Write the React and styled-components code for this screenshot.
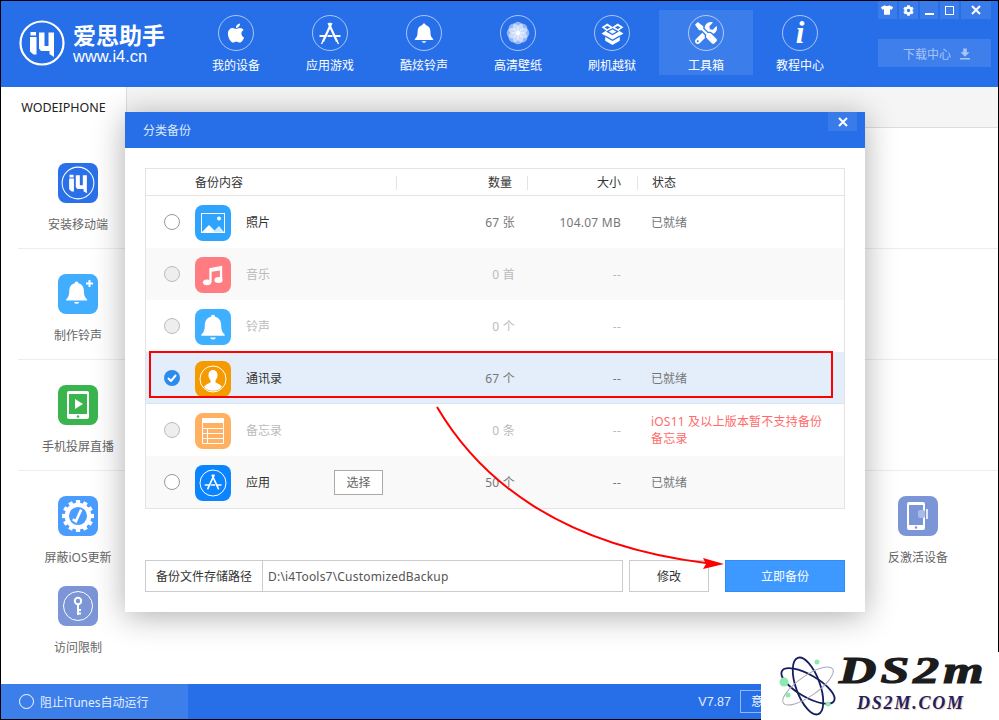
import React from 'react';
import styled, { createGlobalStyle } from 'styled-components';
import { FaApple, FaTshirt, FaCog, FaTools } from 'react-icons/fa';

const FONT = '"Noto Sans", "Noto Sans CJK SC", sans-serif';
const BLUE = '#276fe8';

const Global = createGlobalStyle`
  html, body { margin: 0; padding: 0; background: #000; }
  body { font-family: ${FONT}; font-size: 12px; }
  * { box-sizing: border-box; }
`;

const Win = styled.div`
  position: relative; width: 999px; height: 720px; padding: 1px; background: #000;
  display: flex; flex-direction: column; overflow: hidden;
`;
const Header = styled.header`
  height: 86px; background: ${BLUE}; display: flex; flex: none; padding-left: 18px;
`;
const Brand = styled.div`
  width: 170px; display: flex; align-items: flex-start; padding-top: 19px; gap: 8px; color: #fff;
`;
const BrandText = styled.div`display: flex; flex-direction: column; padding-top: 1px;`;
const BrandName = styled.div`
  font-size: 23px; font-weight: 700; line-height: 26px; height: 26px; width: 94px; white-space: nowrap;
  font-family: "Noto Sans CJK SC", sans-serif;
`;
const BrandUrl = styled.div`
  font-family: "Liberation Sans", sans-serif; font-size: 16.500px; line-height: 16px; margin-top: 1px;
`;
const Nav = styled.nav`display: flex; padding-top: 9px;`;
const NavItem = styled.div`
  width: 94px; height: 65px; display: flex; flex-direction: column; align-items: center; padding-top: 5px;
  background: ${p => (p.$active ? '#3b7dea' : 'transparent')}; color: #fff;
`;
const NavCircle = styled.div`
  width: 36px; height: 36px; border-radius: 50%; border: 1px solid rgba(255,255,255,.6);
  display: flex; align-items: center; justify-content: center; color: #fff; font-size: 20px;
`;
const NavLabel = styled.div`font-size: 12px; line-height: 18px; margin-top: 6px;`;
const InfoI = styled.span`
  font-family: "Liberation Serif", serif; font-style: italic; font-weight: 700; font-size: 31px; line-height: 30px;
`;
const RightCol = styled.div`
  margin-left: auto; margin-right: 7px; width: 113px; display: flex; flex-direction: column;
`;
const Controls = styled.div`display: flex; gap: 2px; height: 18px;`;
const Ctl = styled.div`
  width: ${p => p.$w || 19}px; height: 18px; background: #3a7bea; color: #fff; font-size: 11px;
  display: flex; align-items: center; justify-content: center;
`;
const DownloadBtn = styled.div`
  margin-top: 20px; height: 28px; background: #3f7feb; color: rgba(255,255,255,.55); font-size: 12px;
  display: flex; align-items: center; justify-content: center; gap: 9px; padding: 2px 0 0 4px;
`;
const TabBar = styled.div`
  height: 41px; flex: none; background: #f5f5f5; border-bottom: 1px solid #ddd; display: flex;
`;
const DeviceTab = styled.div`
  width: 126px; background: #fff; border-right: 1px solid #ddd; margin-bottom: -1px; color: #222;
  font-size: 12.500px; display: flex; align-items: center; justify-content: center;
`;
const Content = styled.main`flex: 1; background: #fff; padding-left: 17px; overflow: hidden;`;
const ToolRow = styled.section`
  display: grid; grid-template-columns: repeat(8, 120px);
  padding-top: ${p => p.$pt}px; height: ${p => p.$h}px;
  border-bottom: ${p => (p.$line ? '1px solid #eee' : 'none')};
`;
const Tool = styled.div`
  grid-column: ${p => p.$col || 'auto'};
  display: flex; flex-direction: column; align-items: center;
`;
const ToolIcon = styled.div`
  width: 40px; height: 40px; border-radius: 8px; background: ${p => p.$bg};
  display: flex; align-items: center; justify-content: center;
`;
const ToolLabel = styled.div`margin-top: 13px; font-size: 12px; line-height: 18px; color: #666; white-space: nowrap;`;
const BottomBar = styled.footer`
  height: 35px; flex: none; background: ${BLUE}; display: flex; align-items: center; color: #fff;
`;
const ItunesToggle = styled.div`
  width: 187px; height: 100%; background: #3c7eea; display: flex; align-items: center; padding-left: 18px; gap: 6px;
  color: #e4eeff;
`;
const HollowDot = styled.span`width: 15px; height: 15px; border-radius: 50%; border: 1px solid #fff;`;
const Version = styled.div`margin-left: auto; font-family: "Liberation Sans", sans-serif; font-size: 12.500px; margin-right: 9px; color: #e4eeff;`;
const FeedbackBtn = styled.div`
  width: 90px; height: 23px; margin-right: 168px; border: 1px solid rgba(255,255,255,.5); padding-left: 10px; line-height: 21px;
`;
const Modal = styled.div`
  position: absolute; left: 125px; top: 112px; width: 740px; height: 500px; background: #fff;
  box-shadow: 0 4px 30px rgba(0,0,0,.32); display: flex; flex-direction: column;
`;
const ModalHead = styled.div`
  position: relative; height: 36px; flex: none; background: ${BLUE}; color: #dce8fc; font-size: 12px; line-height: 38px; padding-left: 18px;
`;
const ModalClose = styled.div`
  position: absolute; right: 8px; top: 0; width: 29px; height: 19px; background: #3a7bea;
  display: flex; align-items: center; justify-content: center;
`;
const ModalBody = styled.div`padding: 20px 20px 20px; flex: 1; display: flex; flex-direction: column;`;
const Table = styled.div`height: 341px; border: 1px solid #e4e4e4; display: flex; flex-direction: column;`;
const TableHead = styled.div`
  height: 27px; flex: none; border-bottom: 1px solid #e4e4e4; display: grid; grid-template-columns: 49px 202px 131px 110px 1fr;
  align-items: center; color: #333; line-height: 14px; padding-top: 2px;
`;
const HeadCell = styled.div`
  grid-column: ${p => p.$col || 'auto'};
  text-align: ${p => p.$align || 'left'}; padding: ${p => p.$pad || '0'};
  border-right: ${p => (p.$sep ? '1px solid #e4e4e4' : 'none')};
`;
const Row = styled.div`
  height: 52px; flex: none; display: grid; grid-template-columns: 49px 51px 150px 119px 106px 1fr; align-items: center;
  background: ${p => p.$bg || '#fff'};
  box-shadow: ${p => (p.$sel ? 'inset 0 -1px 0 #d6e3f3' : 'none')};
`;
const RadioCell = styled.div`padding-left: 18px; display: flex;`;
const Radio = styled.span`
  width: 16px; height: 16px; border-radius: 50%;
  border: 1px solid ${p => (p.$off ? '#bbb' : '#999')};
  background: ${p => (p.$off ? '#eee' : '#fff')};
`;
const RadioOn = styled.span`
  width: 16px; height: 16px; border-radius: 50%; background: #2b8cf0;
  display: flex; align-items: center; justify-content: center;
`;
const AppIcon = styled.div`
  width: 36px; height: 36px; margin-top: 2px; border-radius: 8px; background: ${p => p.$bg};
  display: flex; align-items: center; justify-content: center;
`;
const NameCell = styled.div`display: flex; align-items: center; color: ${p => (p.$off ? '#bbb' : '#333')};`;
const NameText = styled.span`width: 88px;`;
const PickBtn = styled.div`
  width: 49px; height: 25px; border: 1px solid #aaa; background: #fff; color: #666; text-align: center; line-height: 24px; flex: none; margin-top: 1px;
`;
const NumCell = styled.div`text-align: right; color: ${p => (p.$off ? '#bbb' : '#777')}; white-space: nowrap; letter-spacing: .25px;`;
const StatusCell = styled.div`
  padding-left: 30px; color: ${p => (p.$warn ? '#ff6a6a' : '#777')}; line-height: 17px; white-space: nowrap;
  letter-spacing: ${p => (p.$warn ? '.2px' : '0')};
`;
const PathBar = styled.div`margin-top: 51px; height: 32px; display: flex;`;
const PathBox = styled.div`width: 478px; border: 1px solid #ccc; display: flex; align-items: stretch;`;
const PathLabel = styled.div`width: 117px; border-right: 1px solid #ccc; color: #333; display: flex; align-items: center; justify-content: center;`;
const PathValue = styled.div`padding-left: 5px; color: #555; display: flex; align-items: center; letter-spacing: .2px;`;
const EditBtn = styled.div`
  width: 80px; margin-left: 6px; border: 1px solid #ccc; color: #333; display: flex; align-items: center; justify-content: center;
`;
const GoBtn = styled.div`
  width: 120px; margin-left: 16px; background: #3d99ff; border: 1px solid #2f8df5; color: #fff; display: flex; align-items: center; justify-content: center;
`;
const Annotation = styled.svg`position: absolute; left: 0; top: 0; pointer-events: none;`;
const Watermark = styled.div`
  position: absolute; left: 761px; top: 652px; width: 238px; height: 68px; background: #fff; display: flex;
`;
const WmAtom = styled.svg`position: absolute; left: 18px; top: 2px;`;
const WmBig = styled.div`
  position: absolute; left: 78px; top: -3px; font-family: "Liberation Serif", serif; font-style: italic; font-weight: 700;
  font-size: 38px; line-height: 42px; color: #1c1c1c; letter-spacing: 3px; transform: scaleX(1.36); transform-origin: left; -webkit-text-stroke: 1.2px #1c1c1c;
`;
const WmSmall = styled.div`
  position: absolute; left: 96px; top: 40px; font-family: "Liberation Serif", serif; font-style: italic; font-weight: 700;
  font-size: 18px; line-height: 22px; color: #1b2366; letter-spacing: 1.800px; text-shadow: 1px 1px 1px #f0c8b0;
`;
const Ico = styled.svg`display: block;`;

const W = '#fff';
const Bell = ({ s = 24, c = W }) => (
  <Ico width={s} height={s} viewBox="0 0 24 24" fill={c}>
    <path d="M12 1.500c1 0 1.700.7 1.800 1.700 3.400.8 5.200 3.600 5.200 7.300 0 3.600.6 5.800 3 8v1H2v-1c2.400-2.200 3-4.400 3-8 0-3.700 1.800-6.500 5.200-7.300.1-1 .8-1.700 1.800-1.700z" />
    <path d="M9.500 21h5c-.4 1-1.300 1.700-2.500 1.700s-2.100-.7-2.500-1.700z" />
  </Ico>
);
const AppA = ({ s = 24, w = 2.200 }) => (
  <Ico width={s} height={s} viewBox="0 0 24 24" fill="none" stroke="#fff" strokeWidth={w}>
    <path d="M13.500 2 5 20.500M10.500 2 19 20.500" />
    <path d="M1.500 15h7M15.500 15h7M9.500 15h5" />
    <path d="M5 20l-1.500 3M19 20l1.500 3" strokeWidth="1.400" />
  </Ico>
);
const Flower = () => (
  <Ico width={26} height={26} viewBox="0 0 30 30">
    {[0, 45, 90, 135, 180, 225, 270, 315].map(a => (
      <circle key={a} cx="15" cy="8" r="6" fill="#fff" opacity=".5" transform={`rotate(${a} 15 15)`} />
    ))}
    <circle cx="15" cy="15" r="2.500" fill="#fff" />
  </Ico>
);
const OpenBox = () => (
  <Ico width={25} height={25} viewBox="0 0 24 24">
    <path d="M7 2.500l5 3.200 5-3.200 5.500 3.500L18 9l4.500 3-3.500 2.200V19l-7 4-7-4v-4.800L1.500 12 6 9 1.500 6z" fill="#fff" />
    <path d="M7 4.800L4.300 6 7 7.800 9.700 6zM17 4.800L14.300 6 17 7.800 19.700 6z" fill={BLUE} />
    <path d="M12 7.500v0L7 10.200 12 13l5-2.800zM5 14.500l7 4 7-4" fill="none" stroke={BLUE} strokeWidth="1.200" />
  </Ico>
);
const I4Mark = ({ s, ring }) => (
  <Ico width={s} height={s} viewBox="0 0 46 46" fill="#fff">
    <circle cx="23" cy="23" r="21.500" fill="none" stroke="#fff" strokeWidth={ring} />
    <path d="M11.500 12h5.500v3.500h-5.500zM11 17h6.500v17.500h-3l-3.500-3z" />
    <path d="M20 12.500h5.500V26h4V12.500h5.500V37l-4.500-3v-3H22l-2-2.500z" />
  </Ico>
);
const BellPlus = () => (
  <Ico width={34} height={34} viewBox="0 0 34 34" fill="#fff">
    <g transform="translate(3 3) scale(1.050)"><path d="M12 1.500c1 0 1.700.7 1.800 1.700 3.400.8 5.200 3.600 5.200 7.300 0 3.600.6 5.800 3 8v1H2v-1c2.400-2.200 3-4.400 3-8 0-3.700 1.800-6.500 5.200-7.300.1-1 .8-1.700 1.800-1.700z" /><path d="M9.500 21h5c-.4 1-1.300 1.700-2.500 1.700s-2.100-.7-2.500-1.700z" /></g>
    <path d="M27.500 3h2v2.500H32v2h-2.500V10h-2V7.500H25v-2h2.500z" />
  </Ico>
);
const PadPlay = () => (
  <Ico width={24} height={30} viewBox="0 0 24 30">
    <rect x="1" y="1" width="22" height="28" rx="2" fill="#fff" />
    <rect x="3" y="4" width="18" height="20" fill="#3ab54e" />
    <path d="M9 9l8 5-8 5z" fill="#fff" />
    <circle cx="12" cy="26.500" r="1.200" fill="#3ab54e" />
  </Ico>
);
const GearCheck = () => (
  <Ico width={34} height={34} viewBox="0 0 32 32">
    <g fill="#fff">
      {[0, 30, 60, 90, 120, 150, 180, 210, 240, 270, 300, 330].map(a => (
        <rect key={a} x="14" y="1" width="4" height="5" transform={`rotate(${a} 16 16)`} />
      ))}
    </g>
    <circle cx="16" cy="16" r="10.500" fill="none" stroke="#fff" strokeWidth="4" />
    <path d="M11 19l3 2 5-11" fill="none" stroke="#fff" strokeWidth="2.400" />
  </Ico>
);
const KeyRing = () => (
  <Ico width={32} height={32} viewBox="0 0 32 32" fill="none" stroke="#fff">
    <circle cx="16" cy="16" r="14.500" strokeWidth="1" />
    <circle cx="16" cy="11" r="3.200" strokeWidth="2" />
    <path d="M16 14v11M16 20h3M16 23.500h3" strokeWidth="2" />
  </Ico>
);
const PadOff = () => (
  <Ico width={24} height={30} viewBox="0 0 24 30">
    <rect x="1" y="1" width="18" height="28" rx="2" fill="#fff" />
    <rect x="3" y="4" width="14" height="20" fill="#7b95d6" />
    <circle cx="10" cy="26.500" r="1.200" fill="#7b95d6" />
    <rect x="12" y="9" width="7" height="8" rx="2" fill="#a9bbe6" />
    <path d="M21 8v10" stroke="#fff" strokeWidth="1.600" />
  </Ico>
);
const Photo = () => (
  <Ico width={24} height={20} viewBox="0 0 24 20">
    <rect x=".5" y=".5" width="23" height="19" fill="none" stroke="#fff" />
    <path d="M1 19l7-7 7 7z" fill="#fff" />
    <path d="M12 19l6-6 5 6z" fill="#cfe9ff" />
    <circle cx="18" cy="5.500" r="2" fill="#fff" />
  </Ico>
);
const Note = () => (
  <Ico width={22} height={24} viewBox="0 0 24 24" fill="#fff">
    <path d="M8 4.500 22 2v15h-2.500V7L10.500 8.500V20H8z" />
    <ellipse cx="5.500" cy="20" rx="4.500" ry="3.200" />
    <ellipse cx="18" cy="17.500" rx="4.500" ry="3.200" />
  </Ico>
);
const Person = () => (
  <Ico width={28} height={28} viewBox="0 0 28 28">
    <circle cx="14" cy="14" r="13" fill="none" stroke="#fff" strokeWidth="1" />
    <path d="M14 5c3 0 4.500 2.300 4.500 5.200 0 2-.8 3.800-2 5v2c1 1.200 5 2 6.500 4.500-2 2.500-5 4-9 4s-7-1.500-9-4c1.500-2.500 5.500-3.300 6.500-4.500v-2c-1.200-1.200-2-3-2-5C9.500 7.300 11 5 14 5z" fill="#fff" />
  </Ico>
);
const Sheet = () => (
  <Ico width={22} height={26} viewBox="0 0 22 26" fill="none" stroke="#fff">
    <path d="M.5 .5h21v4H.5z" fill="#fff" />
    <path d="M.5 4.500v21h21v-21M.5 10.500h21M.5 15.500h21M.5 20.500h21M5.500 10v15" strokeWidth="1" />
  </Ico>
);
const AppRing = () => (
  <Ico width={28} height={28} viewBox="0 0 28 28" fill="none" stroke="#fff">
    <circle cx="14" cy="14" r="13" strokeWidth="1" />
    <g transform="translate(4.500 4) scale(.8)" strokeWidth="2">
      <path d="M13.500 2 5 20.500M10.500 2 19 20.500" />
      <path d="M1.500 15h7M15.500 15h7M9.500 15h5" />
    </g>
  </Ico>
);
const X = ({ s = 10, w = 2 }) => (
  <Ico width={s} height={s} viewBox="0 0 10 10" stroke="#fff" strokeWidth={w}><path d="M1 1l8 8M9 1l-8 8" /></Ico>
);
const Check = () => (
  <Ico width={10} height={8} viewBox="0 0 10 8" fill="none" stroke="#fff" strokeWidth="2"><path d="M1 4l3 3 5-6" /></Ico>
);
const DownIcon = () => (
  <Ico width={10} height={12} viewBox="0 0 11 12" fill="rgba(255,255,255,.55)"><path d="M3.500 0h4v4H10.500L5.500 9 .5 4h3zM0 10.500h11V12H0z" /></Ico>
);

const NAV = [
  ['我的设备', <FaApple size={22} />],
  ['应用游戏', <AppA s={24} />],
  ['酷炫铃声', <Bell s={22} />],
  ['高清壁纸', <Flower />],
  ['刷机越狱', <OpenBox />],
  ['工具箱', <FaTools size={22} />, true],
  ['教程中心', <InfoI>i</InfoI>],
];

const ROWS = [
  { name: '照片', bg: '#2ea4ff', icon: <Photo />, count: '67 张', size: '104.07 MB', status: '已就绪' },
  { name: '音乐', bg: '#ff7d80', icon: <Note />, count: '0 首', size: '--', off: true, row: '#f9f9f9' },
  { name: '铃声', bg: '#3fb0ff', icon: <Bell s={28} />, count: '0 个', size: '--', off: true },
  { name: '通讯录', bg: '#f59a00', icon: <Person />, count: '67 个', size: '--', status: '已就绪', sel: true, row: '#e4eefa' },
  { name: '备忘录', bg: '#ffb060', icon: <Sheet />, count: '0 条', size: '--', off: true, warn: true },
  { name: '应用', bg: '#0a84ff', icon: <AppRing />, count: '50 个', size: '--', status: '已就绪', row: '#f9f9f9', pick: true },
];

export default function App() {
  return (
    <Win>
      <Global />
      <Header>
        <Brand>
          <I4Mark s={46} ring={2.200} />
          <BrandText>
            <BrandName>爱思助手</BrandName>
            <BrandUrl>www.i4.cn</BrandUrl>
          </BrandText>
        </Brand>
        <Nav>
          {NAV.map(([label, icon, active]) => (
            <NavItem key={label} $active={active}>
              <NavCircle>{icon}</NavCircle>
              <NavLabel>{label}</NavLabel>
            </NavItem>
          ))}
        </Nav>
        <RightCol>
          <Controls>
            <Ctl><FaTshirt size={12} /></Ctl>
            <Ctl><FaCog size={11} /></Ctl>
            <Ctl><Ico width={9} height={9} viewBox="0 0 9 9" fill="#fff"><rect y="7" width="9" height="2" /></Ico></Ctl>
            <Ctl><Ico width={9} height={9} viewBox="0 0 9 9" fill="none" stroke="#fff"><rect x=".5" y=".5" width="8" height="8" /></Ico></Ctl>
            <Ctl $w={30}><X s={10} /></Ctl>
          </Controls>
          <DownloadBtn>下载中心 <DownIcon /></DownloadBtn>
        </RightCol>
      </Header>
      <TabBar><DeviceTab>WODEIPHONE</DeviceTab></TabBar>
      <Content>
        <ToolRow $pt={35} $h={121} $line>
          <Tool><ToolIcon $bg="#2a70e8"><I4Mark s={34} ring={1.400} /></ToolIcon><ToolLabel>安装移动端</ToolLabel></Tool>
        </ToolRow>
        <ToolRow $pt={25} $h={111} $line>
          <Tool><ToolIcon $bg="#41adff"><BellPlus /></ToolIcon><ToolLabel>制作铃声</ToolLabel></Tool>
        </ToolRow>
        <ToolRow $pt={25} $h={111} $line>
          <Tool><ToolIcon $bg="#3ab54e"><PadPlay /></ToolIcon><ToolLabel>手机投屏直播</ToolLabel></Tool>
        </ToolRow>
        <ToolRow $pt={25} $h={90}>
          <Tool $col={1}><ToolIcon $bg="#4a9dff"><GearCheck /></ToolIcon><ToolLabel>屏蔽iOS更新</ToolLabel></Tool>
          <Tool $col={8}><ToolIcon $bg="#7b95d6"><PadOff /></ToolIcon><ToolLabel>反激活设备</ToolLabel></Tool>
        </ToolRow>
        <ToolRow $pt={25} $h={100}>
          <Tool><ToolIcon $bg="#7b95d6"><KeyRing /></ToolIcon><ToolLabel>访问限制</ToolLabel></Tool>
        </ToolRow>
      </Content>
      <BottomBar>
        <ItunesToggle><HollowDot />阻止iTunes自动运行</ItunesToggle>
        <Version>V7.87</Version>
        <FeedbackBtn>意见反馈</FeedbackBtn>
      </BottomBar>

      <Modal>
        <ModalHead>
          分类备份
          <ModalClose><X s={10} /></ModalClose>
        </ModalHead>
        <ModalBody>
          <Table>
            <TableHead>
              <HeadCell $col={2} $sep>备份内容</HeadCell>
              <HeadCell $align="right" $pad="0 15px 0 0" $sep>数量</HeadCell>
              <HeadCell $align="right" $pad="0 16px 0 0" $sep>大小</HeadCell>
              <HeadCell $pad="0 0 0 14px">状态</HeadCell>
            </TableHead>
            {ROWS.map(r => (
              <Row key={r.name} $bg={r.row} $sel={r.sel}>
                <RadioCell>{r.sel ? <RadioOn><Check /></RadioOn> : <Radio $off={r.off} />}</RadioCell>
                <AppIcon $bg={r.bg}>{r.icon}</AppIcon>
                <NameCell $off={r.off}>
                  <NameText>{r.name}</NameText>
                  {r.pick && <PickBtn>选择</PickBtn>}
                </NameCell>
                <NumCell $off={r.off}>{r.count}</NumCell>
                <NumCell $off={r.off}>{r.size}</NumCell>
                {r.warn
                  ? <StatusCell $warn>iOS11 及以上版本暂不支持备份<br />备忘录</StatusCell>
                  : <StatusCell>{r.status}</StatusCell>}
              </Row>
            ))}
          </Table>
          <PathBar>
            <PathBox>
              <PathLabel>备份文件存储路径</PathLabel>
              <PathValue>D:\i4Tools7\CustomizedBackup</PathValue>
            </PathBox>
            <EditBtn>修改</EditBtn>
            <GoBtn>立即备份</GoBtn>
          </PathBar>
        </ModalBody>
      </Modal>

      <Annotation width="999" height="720" viewBox="0 0 999 720" fill="none">
        <rect x="150" y="352" width="682" height="45" stroke="#f00" strokeWidth="2" />
        <path d="M437 407C480 480 560 545 706 563" stroke="#f00" strokeWidth="2" />
        <path d="M703 558l21 6-21 5 3-5z" fill="#f00" />
      </Annotation>

      <Watermark>
        <WmAtom width="58" height="64" viewBox="0 0 58 64" fill="none">
          <ellipse cx="29" cy="32" rx="12" ry="30" stroke="#14205e" strokeWidth="1.800" transform="rotate(-20 29 32)" />
          <ellipse cx="29" cy="32" rx="30" ry="11" stroke="#14205e" strokeWidth="1.800" transform="rotate(30 29 32)" />
          <ellipse cx="29" cy="32" rx="30" ry="10" stroke="#aab" strokeWidth="1" transform="rotate(-35 29 32)" />
          <circle cx="5" cy="28" r="4.500" fill="#8fe8ae" />
          <circle cx="9" cy="41" r="2.500" fill="#8fe8ae" />
          <circle cx="38" cy="8" r="2.500" fill="#8fe8ae" />
          <circle cx="49" cy="50" r="2.500" fill="#8fe8ae" />
        </WmAtom>
        <WmBig>DS2m</WmBig>
        <WmSmall>DS2M.COM</WmSmall>
      </Watermark>
    </Win>
  );
}
